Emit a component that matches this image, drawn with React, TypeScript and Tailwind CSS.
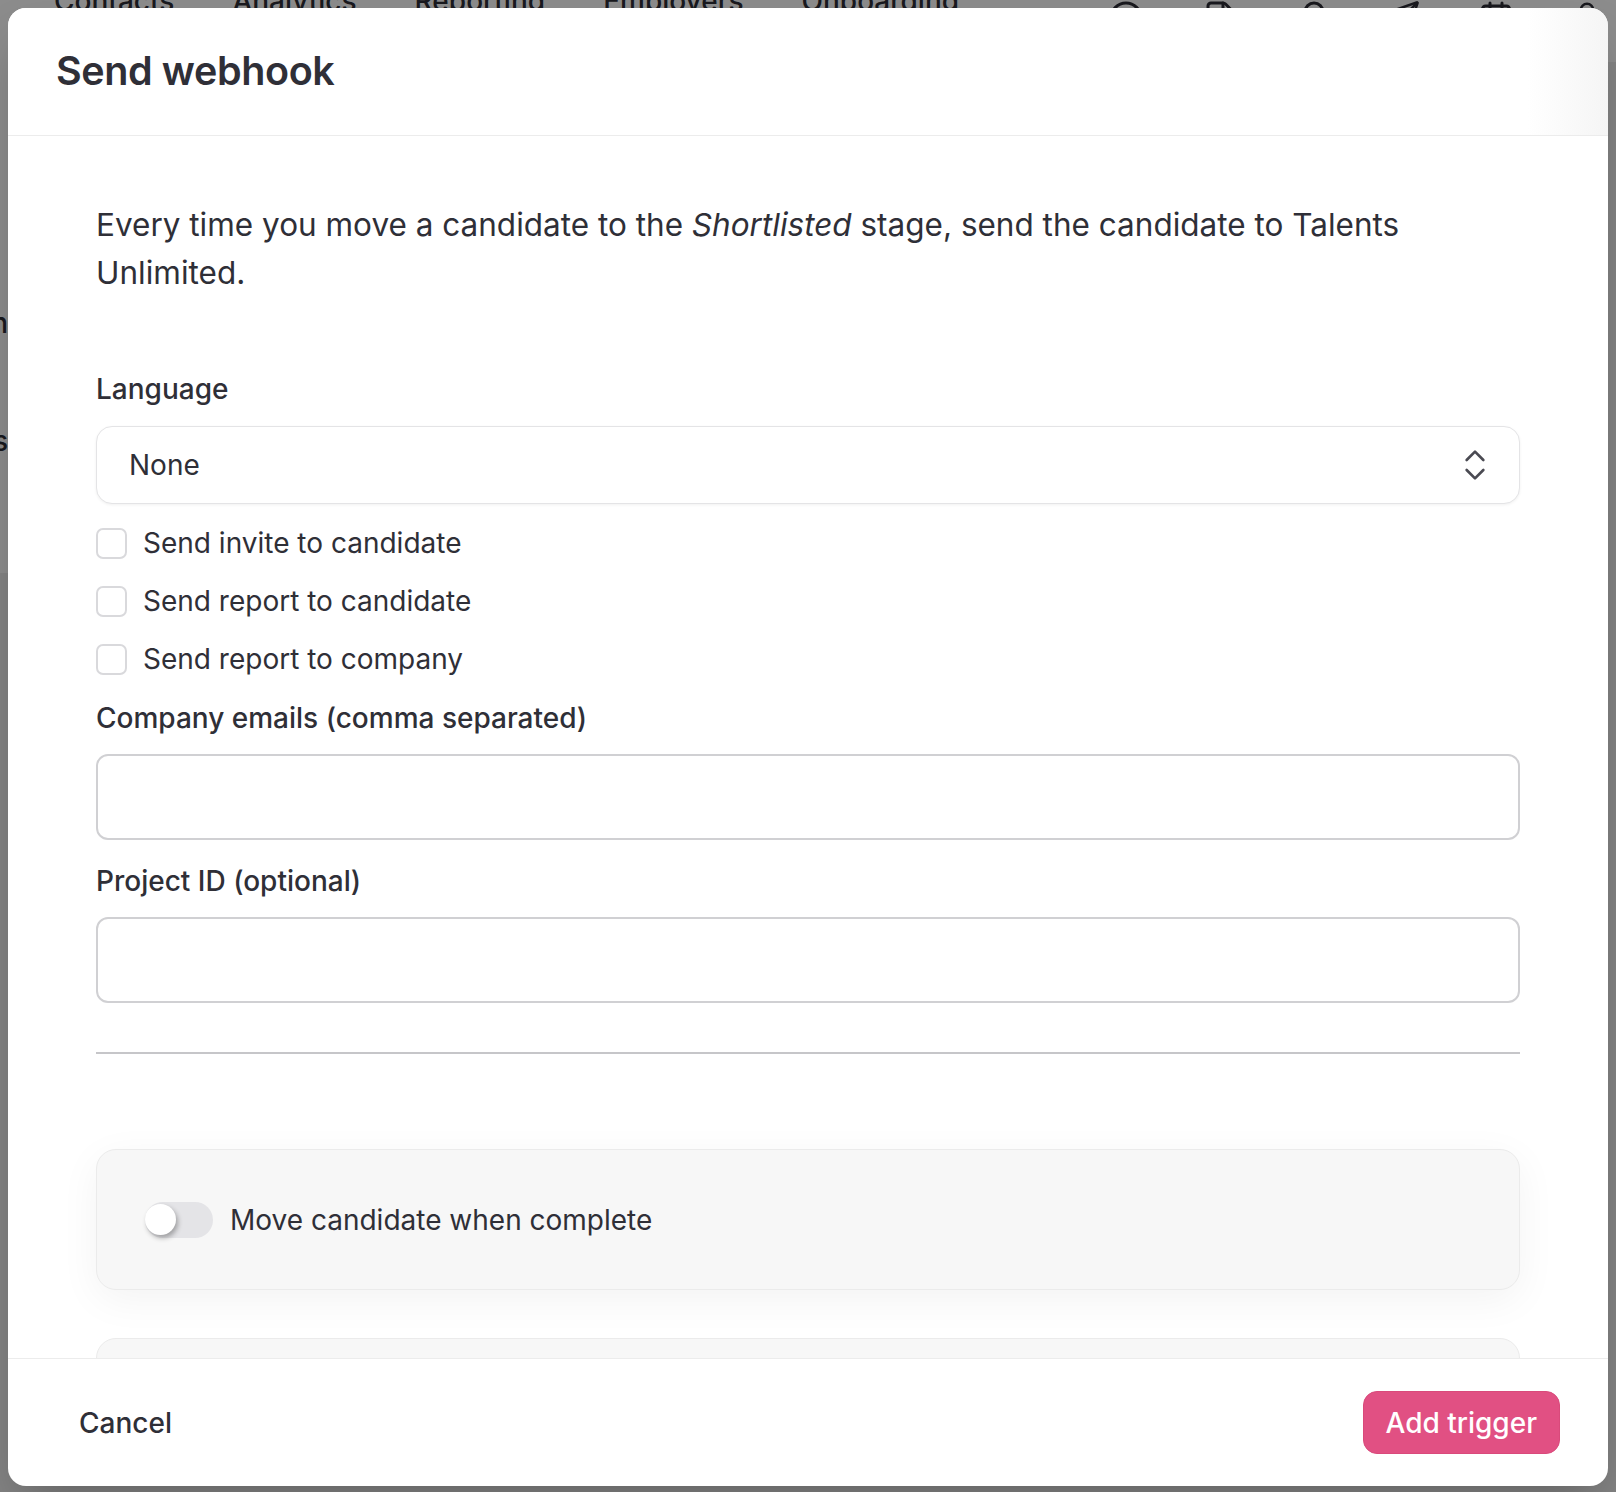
import { ChevronsUpDown, CircleHelp, FileText, Send, Calendar, UserRound, Bell } from 'lucide-react'

const options = ['Send invite to candidate', 'Send report to candidate', 'Send report to company']

function Backdrop() {
  return (
    <div className="flex h-full flex-col bg-[#eeeeee]">
      <header className="flex h-[62px] items-start justify-between overflow-hidden bg-white pl-[54px] pr-[14px]">
        <nav className="-mt-[20px] flex items-center gap-[58px] text-[28px] font-medium text-[#2f2f37]">
          <span>Contacts</span>
          <span>Analytics</span>
          <span>Reporting</span>
          <span>Employers</span>
          <span>Onboarding</span>
        </nav>
        <div className="flex items-start gap-[58px] text-[#2f2f37]">
          <CircleHelp size={36} strokeWidth={2} />
          <FileText size={36} strokeWidth={2} />
          <Bell size={36} strokeWidth={2} />
          <Send size={30} strokeWidth={2} />
          <Calendar size={36} strokeWidth={2} />
          <UserRound size={30} strokeWidth={2} />
        </div>
      </header>
      <div className="flex flex-1">
        <aside className="flex h-[511px] w-[8px] flex-col items-end overflow-hidden bg-white pt-[240px] text-[28px] font-medium text-[#2f2f37]">
          <span className="whitespace-nowrap">Location</span>
          <span className="mt-[76px] whitespace-nowrap">Jobs</span>
        </aside>
      </div>
    </div>
  )
}

function Checkbox({ label }: { label: string }) {
  return (
    <label className="flex h-[42px] items-center gap-[16px]">
      <span className="h-[31px] w-[31px] rounded-[7px] border-2 border-[#d9d9dc] bg-white" />
      <span className="text-[28px] text-[#2f2f37]">{label}</span>
    </label>
  )
}

export default function App() {
  return (
    <div className="relative h-[1492px] w-[1616px] overflow-hidden bg-white font-['Inter',sans-serif] leading-[1.5] text-[#2f2f37]">
      <Backdrop />

      <div className="absolute inset-0 bg-black/45 px-2 pt-2">
        <div className="flex h-[1478px] w-[1600px] flex-col overflow-hidden rounded-[18px] bg-white shadow-2xl">
          <div className="flex h-[128px] shrink-0 items-center border-b border-[#ececec] bg-[linear-gradient(to_right,#ffffff_95%,#f5f5f5)] px-12">
            <h1 className="text-[39.5px] font-semibold tracking-[-0.01em] text-[#2f2f37]">Send webhook</h1>
          </div>

          <div className="flex-1 overflow-hidden px-[88px] pt-[65px]">
            <p className="text-[31.5px] leading-[47.5px] text-[#2f2f37]">
              Every time you move a candidate to the <em>Shortlisted</em> stage, send the candidate to Talents Unlimited.
            </p>

            <div className="mt-[72px] text-[28px] font-medium">Language</div>
            <div className="mt-[16px] flex h-[78px] items-center justify-between rounded-[16px] border-[1.5px] border-[#e4e4e6] bg-white pl-8 pr-6 shadow-[0_1px_3px_rgba(0,0,0,0.06)]">
              <span className="text-[28px]">None</span>
              <ChevronsUpDown size={40} strokeWidth={1.6} className="text-[#4a4a52]" />
            </div>

            <div className="mt-[18px] flex flex-col gap-[16px]">
              {options.map((o) => (
                <Checkbox key={o} label={o} />
              ))}
            </div>

            <div className="mt-[17px] text-[28px] font-medium">Company emails (comma separated)</div>
            <div className="mt-[15px] h-[86px] rounded-[12px] border-2 border-[#d0d0d3] bg-white" />

            <div className="mt-[20px] text-[28px] font-medium">Project ID (optional)</div>
            <div className="mt-[15px] h-[86px] rounded-[12px] border-2 border-[#d0d0d3] bg-white" />

            <div className="mt-[49px] h-[2px] bg-[#c6c6c9]" />

            <div className="mt-[95px] flex h-[141px] items-center gap-[17px] rounded-[20px] border border-[#ebebeb] bg-[#f7f7f7] px-12 shadow-[0_10px_40px_rgba(0,0,0,0.05)]">
              <span className="flex h-[36px] w-[68px] items-center rounded-full bg-[#e4e4e7]">
                <span className="h-[31px] w-[31px] rounded-full bg-white shadow-[2px_3px_5px_rgba(0,0,0,0.3)]" />
              </span>
              <span className="text-[28px]">Move candidate when complete</span>
            </div>

            <div className="mt-[48px] h-[141px] rounded-[20px] border border-[#ebebeb] bg-[#f7f7f7]" />
          </div>

          <div className="flex h-[128px] shrink-0 items-center justify-between border-t border-[#ececec] px-12">
            <button className="rounded-[14px] px-[23px] py-[10px] text-[28px] font-medium text-[#2f2f37]">Cancel</button>
            <button className="h-[63px] rounded-[14px] border border-[#d94a7b] bg-[#e15083] px-[22px] text-[28px] font-medium text-white">
              Add trigger
            </button>
          </div>
        </div>
      </div>
    </div>
  )
}
